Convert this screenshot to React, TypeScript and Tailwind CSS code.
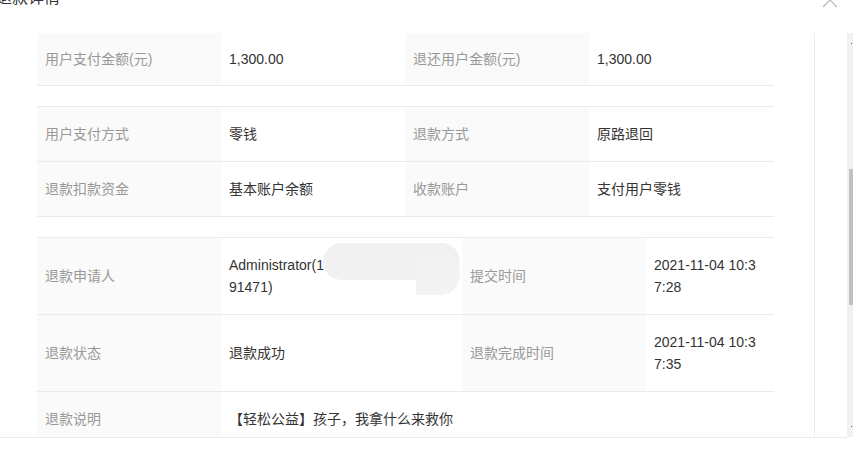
import React from "react";

const font = { fontFamily: '"Liberation Sans", "Noto Sans CJK SC", sans-serif' };

function Cell({ label, w, children }: { label?: boolean; w: string; children: React.ReactNode }) {
  return (
    <div
      className={`${w} h-full flex items-center px-2 text-[14px] ${
        label ? "bg-[#fafafa] text-[#999999]" : "text-[#333333]"
      }`}
    >
      {children}
    </div>
  );
}

export default function App() {
  return (
    <div className="w-[853px] h-[451px] bg-white overflow-hidden relative" style={font}>
      {/* header */}
      <div className="h-[33px] flex justify-between">
        <div className="-mt-[13px] -ml-[4px] text-[16px] leading-[22px] text-[#333333]">退款详情</div>
        <svg className="-mt-[8px] mr-[15px]" width="16" height="16" viewBox="0 0 16 16">
          <path d="M1 1 L15 15 M15 1 L1 15" stroke="#bdbdbd" strokeWidth="1.4" fill="none" />
        </svg>
      </div>
      {/* body */}
      <div className="flex">
        <div className="w-[847px] h-[405px] border-b border-[#ebebeb] flex">
          <div className="w-[815px] h-full border-r border-[#ebebeb] overflow-hidden pl-[37px]">
            <div className="w-[737px]">
              <div className="h-[53px] flex border-b border-[#ebebeb]">
                <Cell label w="w-[184px]">用户支付金额(元)</Cell>
                <Cell w="w-[184px]">1,300.00</Cell>
                <Cell label w="w-[184px]">退还用户金额(元)</Cell>
                <Cell w="w-[185px]">1,300.00</Cell>
              </div>
              <div className="h-[20px]" />
              <div className="border-t border-[#ebebeb]">
                <div className="h-[55px] flex border-b border-[#ebebeb]">
                  <Cell label w="w-[184px]">用户支付方式</Cell>
                  <Cell w="w-[184px]">零钱</Cell>
                  <Cell label w="w-[184px]">退款方式</Cell>
                  <Cell w="w-[185px]">原路退回</Cell>
                </div>
                <div className="h-[55px] flex border-b border-[#ebebeb]">
                  <Cell label w="w-[184px]">退款扣款资金</Cell>
                  <Cell w="w-[184px]">基本账户余额</Cell>
                  <Cell label w="w-[184px]">收款账户</Cell>
                  <Cell w="w-[185px]">支付用户零钱</Cell>
                </div>
              </div>
              <div className="h-[20px]" />
              <div className="border-t border-[#ebebeb]">
                <div className="h-[77px] flex border-b border-[#ebebeb]">
                  <Cell label w="w-[184px]">退款申请人</Cell>
                  <div className="w-[241px] h-full flex items-center px-2 text-[14px] text-[#333333] relative">
                    <div className="leading-[22px]">
                      <div>Administrator(1</div>
                      <div>91471)</div>
                    </div>
                    <div className="absolute left-[102px] top-[5px] w-[137px] h-[37px] rounded-full bg-[#f1f1f1]" />
                    <div className="absolute left-[195px] top-[17px] w-[44px] h-[40px] rounded-r-full bg-[#f3f3f3]" />
                  </div>
                  <Cell label w="w-[184px]">提交时间</Cell>
                  <div className="w-[128px] h-full flex items-center pl-2 text-[14px] text-[#333333]">
                    <div className="w-[105px] break-all leading-[22px]">2021-11-04 10:37:28</div>
                  </div>
                </div>
                <div className="h-[77px] flex border-b border-[#ebebeb]">
                  <Cell label w="w-[184px]">退款状态</Cell>
                  <Cell w="w-[241px]">退款成功</Cell>
                  <Cell label w="w-[184px]">退款完成时间</Cell>
                  <div className="w-[128px] h-full flex items-center pl-2 text-[14px] text-[#333333]">
                    <div className="w-[105px] break-all leading-[22px]">2021-11-04 10:37:35</div>
                  </div>
                </div>
                <div className="h-[55px] flex">
                  <Cell label w="w-[184px]">退款说明</Cell>
                  <Cell w="w-[553px]">【轻松公益】孩子，我拿什么来救你</Cell>
                </div>
              </div>
            </div>
          </div>
        </div>
        {/* scrollbar */}
        <div className="w-[6px] h-[404px] bg-[#f1f1f1] flex flex-col items-end">
          <div className="h-[10px]" />
          <div className="w-[1px] h-[1px] bg-[#555555] mr-[1px]" />
          <div className="h-[125px]" />
          <div className="w-[4px] h-[136px] bg-[#c1c1c1]" />
          <div className="flex-1" />
          <div className="w-[1px] h-[1px] bg-[#555555] mr-[1px]" />
          <div className="h-[10px]" />
        </div>
      </div>
    </div>
  );
}
